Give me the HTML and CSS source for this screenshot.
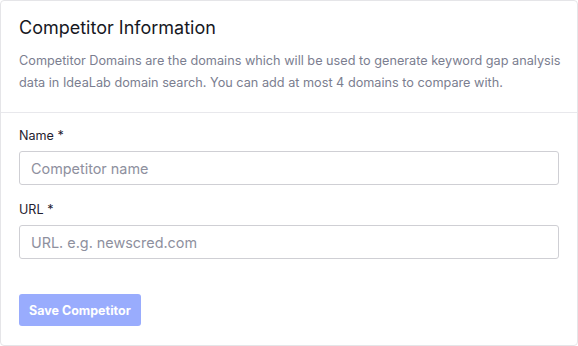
FILE: index.html
```html
<!DOCTYPE html>
<html>
<head>
<meta charset="utf-8">
<link rel="stylesheet" href="styles.css">
</head>
<body>
<div class="card">
  <div class="card-header">
    <h2 class="title">Competitor Information</h2>
    <p class="desc">Competitor Domains are the domains which will be used to generate keyword gap analysis data in IdeaLab domain search. You can add at most 4 domains to compare with.</p>
  </div>
  <div class="card-body">
    <label class="field">
      <span class="label">Name *</span>
      <input class="input" type="text" placeholder="Competitor name">
    </label>
    <label class="field">
      <span class="label">URL *</span>
      <input class="input" type="text" placeholder="URL. e.g. newscred.com">
    </label>
    <button class="btn" disabled>Save Competitor</button>
  </div>
</div>
</body>
</html>
```
FILE: styles.css
```css
html, body {
  margin: 0;
  padding: 0;
  background: #ffffff;
}
body {
  font-family: Inter, "Noto Sans", sans-serif;
  color: #1f2130;
}
.card {
  box-sizing: border-box;
  width: 578px;
  height: 346px;
  border: 1px solid #e5e5e8;
  border-radius: 4px;
  background: #fff;
}
.card-header {
  padding: 16px 12px 0 18px;
  height: 112px;
  box-sizing: border-box;
  border-bottom: 1px solid #e8e8ec;
}
.title {
  margin: 0;
  font-size: 18px;
  font-weight: 400;
  line-height: 22px;
  color: #17181f;
}
.desc {
  margin: 11px 0 0 0;
  font-size: 12.7px;
  line-height: 22px;
  color: #7b7e90;
}
.card-body {
  padding: 13px 18px 0 18px;
  display: flex;
  flex-direction: column;
}
.field {
  display: flex;
  flex-direction: column;
  margin-bottom: 15px;
}
.label {
  font-size: 12.6px;
  line-height: 20px;
  color: #1f2130;
  margin-bottom: 5px;
}
.input {
  box-sizing: border-box;
  height: 34px;
  width: 540px;
  border: 1px solid #cfcfd4;
  border-radius: 3px;
  padding: 0 11px;
  font-family: Inter, "Noto Sans", sans-serif;
  font-size: 14.4px;
  color: #1f2130;
  outline: none;
}
.input::placeholder {
  color: #8e909e;
}
.btn {
  align-self: flex-start;
  margin-top: 20px;
  height: 32px;
  padding: 0 10px;
  border: none;
  border-radius: 3px;
  background: #99acfd;
  color: #fff;
  font-family: Inter, "Noto Sans", sans-serif;
  font-weight: 700;
  font-size: 12.5px;
}
```
